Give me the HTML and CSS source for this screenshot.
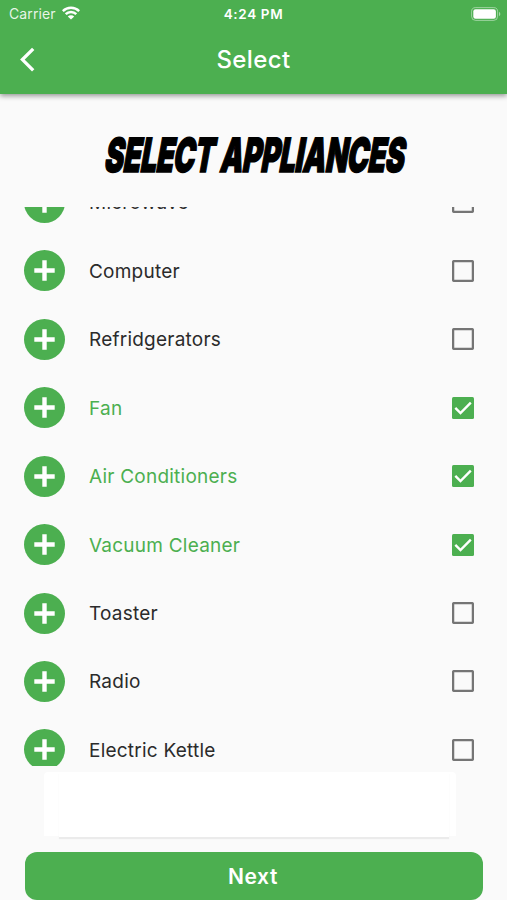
FILE: index.html
```html
<!DOCTYPE html>
<html lang="en">
<head>
    <meta charset="UTF-8">
    <meta name="viewport" content="width=device-width, initial-scale=1.0">
    <title>Select</title>
    <link rel="stylesheet" href="styles.css">
</head>
<body>

    <header class="header">
        <div class="status">
            <div class="carrier">
                <span>Carrier</span>
                <svg class="wifi" viewBox="0 0 18 14" fill="none" stroke="#fff" stroke-width="2.5">
                    <path d="M.8 5.1a11.8 11.8 0 0 1 16.4 0M3.7 8.2a7.5 7.5 0 0 1 10.6 0"/>
                    <path d="M9 13.6 5.8 10.5a4.5 4.5 0 0 1 6.4 0z" fill="#fff" stroke="none"/>
                </svg>
            </div>
            <span class="time">4:24 PM</span>
            <svg class="battery" viewBox="0 0 30 14">
                <rect x=".6" y=".6" width="26" height="12.8" rx="4" fill="none" stroke="#fff" stroke-opacity=".45" stroke-width="1"/>
                <rect x="2.3" y="2.3" width="22.6" height="9.4" rx="2.2" fill="#fff"/>
                <path d="M28 4.8c1.8.7 1.8 3.7 0 4.4z" fill="#fff" fill-opacity=".5"/>
            </svg>
        </div>
        <div class="appbar">
            <svg class="back" viewBox="0 0 16 26" fill="none" stroke="#fff" stroke-width="3.3">
                <path d="M13.2 1.8 2.4 12.6l10.8 10.8"/>
            </svg>
            <span class="appbar-title">Select</span>
        </div>
    </header>

    <h1 class="title"><span>SELECT APPLIANCES</span></h1>

    <ul class="list" id="list"></ul>

    <div class="panel"><div class="panel-inner"></div></div>

    <button class="next">Next</button>

    <script>
        const appliances = [
            { name: "Microwave" },
            { name: "Computer" },
            { name: "Refridgerators" },
            { name: "Fan", checked: true },
            { name: "Air Conditioners", checked: true },
            { name: "Vacuum Cleaner", checked: true },
            { name: "Toaster" },
            { name: "Radio" },
            { name: "Electric Kettle" }
        ];

        const plus = `<svg class="plus" viewBox="0 0 41 41"><circle cx="20.5" cy="20.5" r="20.5" fill="#4caf50"/><path d="M10.3 20.5h20.4M20.5 10.3v20.4" stroke="#fff" stroke-width="4.4"/></svg>`;
        const box = `<svg class="box" viewBox="0 0 22 22"><rect x="1.1" y="1.1" width="19.8" height="19.8" rx="1" fill="none" stroke="#757575" stroke-width="2.3"/></svg>`;
        const boxChecked = `<svg class="box" viewBox="0 0 22 22"><rect width="22" height="22" rx="1.5" fill="#4caf50"/><path d="M3.3 10.8l5.2 5.2L18.8 5.6" fill="none" stroke="#fff" stroke-width="2.4"/></svg>`;

        document.getElementById("list").innerHTML = appliances.map(a => `
            <li class="row${a.checked ? " checked" : ""}">
                ${plus}
                <span class="name">${a.name}</span>
                ${a.checked ? boxChecked : box}
            </li>`).join("");
    </script>

</body>
</html>
```
FILE: styles.css
```css
* {
    box-sizing: border-box;
}
body {
    margin: 0;
    height: 900px;
    overflow: hidden;
    display: flex;
    flex-direction: column;
    background: #fafafa;
    font-family: Inter, "Liberation Sans", sans-serif;
}
.header {
    flex: none;
    height: 94px;
    background: #4caf50;
    color: white;
    box-shadow: 0 2px 5px rgba(0, 0, 0, 0.4);
}
.status {
    display: grid;
    grid-template-columns: 1fr auto 1fr;
    align-items: center;
    height: 27px;
    padding: 0 6px 0 9px;
    font-size: 14px;
}
.carrier {
    display: flex;
    align-items: center;
    gap: 6px;
    letter-spacing: 0.1px;
    color: rgba(255, 255, 255, 0.88);
}
.wifi {
    width: 18px;
    height: 14px;
    margin-top: -2px;
}
.time {
    margin-right: 3px;
    font-size: 13.5px;
    font-weight: 600;
    letter-spacing: 0.65px;
}
.battery {
    width: 30px;
    height: 14px;
    justify-self: end;
}
.appbar {
    display: grid;
    grid-template-columns: 1fr auto 1fr;
    align-items: center;
    height: 65px;
    padding: 0 20px;
}
.back {
    width: 16px;
    height: 26px;
}
.appbar-title {
    font-size: 24px;
    font-weight: 500;
    letter-spacing: 0.4px;
}
.title {
    flex: none;
    display: flex;
    justify-content: center;
    align-items: center;
    height: 113px;
    margin: 0;
    padding: 8px 0 0 5px;
    font-size: 47px;
    font-weight: 900;
    letter-spacing: -0.6px;
    word-spacing: 2px;
    white-space: nowrap;
    -webkit-text-stroke: 1.5px black;
}
.title span {
    transform: skewX(-10deg) scaleX(0.608);
}
.list {
    flex: none;
    height: 559px;
    margin: 0;
    padding: 0;
    overflow: hidden;
    list-style: none;
}
.row {
    display: flex;
    align-items: center;
    height: 68.45px;
    padding: 0 33px 0 24px;
    color: #2b2b2b;
}
.row:first-child {
    margin-top: -38.8px;
}
.plus {
    width: 41px;
    height: 41px;
}
.name {
    flex: 1;
    margin-left: 24px;
    padding-top: 1px;
    font-size: 19px;
    letter-spacing: 0.23px;
}
.box {
    width: 22px;
    height: 22px;
}
.checked {
    color: #4caf50;
}
.panel {
    flex: none;
    width: 412px;
    height: 64px;
    margin: 6px 0 16px 44px;
    padding: 0 7px 0 15px;
    background: white;
    border-radius: 4px 4px 0 0;
}
.panel-inner {
    height: 65px;
    background: white;
    box-shadow: 0 2px 1px rgba(0, 0, 0, 0.06);
}
.next {
    flex: none;
    height: 48px;
    margin: 0 24px 0 25px;
    padding: 0 2px 0 0;
    border: none;
    border-radius: 12px;
    background: #4caf50;
    color: white;
    font-family: inherit;
    font-size: 21px;
    font-weight: 600;
    letter-spacing: 0.6px;
}
```
